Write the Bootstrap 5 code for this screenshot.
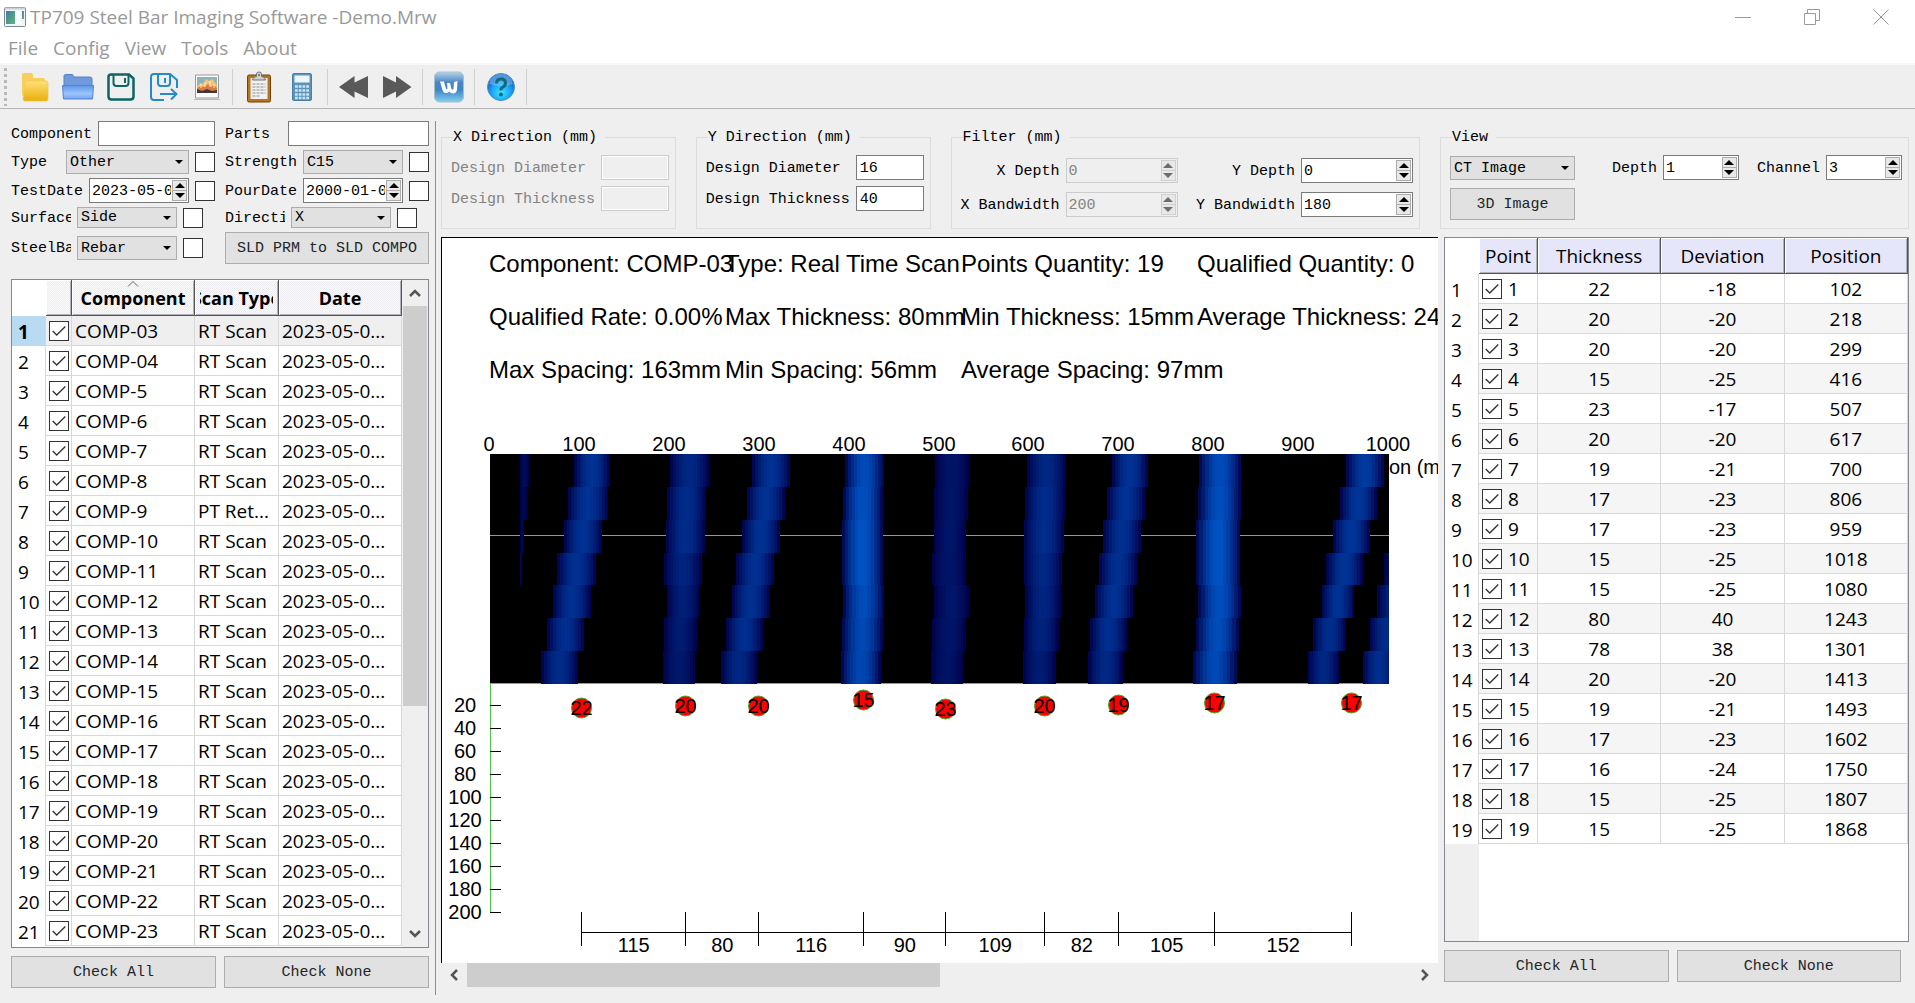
<!DOCTYPE html>
<html lang="en">
<head>
    <meta charset="UTF-8">
    <meta name="viewport" content="width=device-width, initial-scale=1.0">
    <title>TP709 Steel Bar Imaging Software</title>
    <link href="https://cdn.jsdelivr.net/npm/bootstrap@5.3.0/dist/css/bootstrap.min.css" rel="stylesheet">
    <style>
        body { background: #efefef; color: #000; font-family: "Liberation Mono", monospace; font-size: 15px; line-height: 18px; }
        .ui-font { font-family: "Open Sans", "Noto Sans", sans-serif; }

        .title-bar { height: 33px; font-size: 19px; color: #999; }
        .title-bar .window-btn { width: 69px; height: 33px; }
        .menu-bar { height: 30px; font-size: 19px; gap: 15px; padding-bottom: 1px; }
        .menu-bar a { color: #999; text-decoration: none; }
        .tool-bar { height: 46px; border-top: 2px solid #f7f7f7; border-bottom: 1px solid #b5b5b5; }
        .tool-bar button { width: 43px; height: 40px; }
        .tool-bar .tool-sep { width: 1px; height: 36px; margin: 0 4px; background: #cfcfcf; }
        .tool-grip { width: 3px; height: 38px; margin: 0 6px 0 4px; background: repeating-linear-gradient(#b8b8b8 0 3px, transparent 3px 6px); }
        .plain-btn { border: 0; padding: 0; background: none; display: flex; align-items: center; justify-content: center; }

        .workspace { display: grid; grid-template-columns: minmax(0, 436fr) minmax(0, 1002fr) minmax(0, 477fr); grid-template-rows: minmax(0, 1fr); padding: 12px 0 8px; min-height: 0; }
        .left-dock { padding: 0 6px 7px 11px; border-right: 1px solid #8c8c8c; }
        .center-dock { padding: 6px 0 8px 5px; }
        .right-dock { padding: 6px 6px 13px 2px; }
        .workspace label, .workspace legend { padding-top: 2px; }

        .form-grid { display: grid; grid-template-columns: minmax(0, 1fr) minmax(0, 1fr); gap: 4px 10px; margin-bottom: 15px; }
        .form-grid .line { display: flex; align-items: center; gap: 6px; min-width: 0; }
        .form-grid .line.short { padding-right: 12px; }
        .form-grid label { white-space: nowrap; overflow: hidden; flex: none; }
        .label-type { width: 49px; }
        .label-parts { width: 57px; }
        .label-cut { width: 60px; }

        .box-input, .box-spin { height: 25px; border: 1px solid #7a7a7a; background: #fff; border-radius: 0; padding: 2px 3px 0; min-width: 0; width: 100%; color: #000; }
        .box-input:disabled, .box-spin.off { background: #efefef; border-color: #ccc; color: #838383; }
        .box-input:disabled { box-shadow: inset 0 0 0 1px #fff; }
        .box-spin { display: flex; padding: 1px; }
        .box-spin input { border: 0; background: none; min-width: 0; width: 100%; padding: 2px 1px 0; color: inherit; outline: 0; }
        .spin-keys { width: 15px; flex: none; display: flex; flex-direction: column; border: 1px solid #adadad; }
        .spin-keys button { flex: 1; background: #e8e8e8; min-height: 0; }
        .spin-keys button + button { border-top: 1px solid #adadad; }
        .spin-keys button::after { content: ""; border: 5px solid transparent; border-top: 0; border-bottom: 5px solid #000; }
        .spin-keys button + button::after { border-bottom: 0; border-top: 5px solid #000; }
        .off .spin-keys { border-color: #d0d0d0; }
        .off .spin-keys button::after { border-bottom-color: #6d6d6d; }
        .off .spin-keys button + button { border-top-color: #d0d0d0; }
        .off .spin-keys button + button::after { border-top-color: #6d6d6d; }
        .box-select { appearance: none; height: 24px; border: 1px solid #adadad; border-radius: 0; padding: 2px 3px 0; min-width: 0; width: 100%; color: #000;
            background: #e1e1e1 url("data:image/svg+xml,%3Csvg xmlns='http://www.w3.org/2000/svg' width='8' height='4'%3E%3Cpath d='M0 0h8l-4 4z'/%3E%3C/svg%3E") no-repeat right 5px center; }
        .box-select.low { height: 21px; padding-top: 0; }
        .form-check-input.tick { width: 20px; height: 20px; margin: 0; flex: none; display: block; border: 1px solid #333; border-radius: 0; background-color: #fff; }
        .form-check-input.tick:checked { background-color: #fff; border-color: #333;
            background-image: url("data:image/svg+xml,%3Csvg xmlns='http://www.w3.org/2000/svg' viewBox='0 0 20 20'%3E%3Cpath d='M3 10l4.500 4.500L17 5' fill='none' stroke='%23333' stroke-width='1.500'/%3E%3C/svg%3E"); }
        .box-btn { --bs-btn-bg: #e1e1e1; --bs-btn-border-color: #adadad; --bs-btn-hover-bg: #e5f1fb; --bs-btn-border-radius: 0; --bs-btn-font-size: 15px; --bs-btn-line-height: 18px; --bs-btn-padding-x: 0; --bs-btn-padding-y: 7px; height: 32px; white-space: nowrap; }

        .group-row { display: grid; grid-template-columns: minmax(0, 1fr) minmax(0, 1fr) minmax(0, 2fr); gap: 20px; padding-right: 18px; margin-bottom: 8px; }
        fieldset.group { border: 1px solid #dcdcdc; height: 102px; padding: 8px 6px 0 9px; min-width: 0; }
        fieldset.group legend { float: none; width: auto; margin: 0 0 0 2px; padding-right: 8px; font-size: 15px; line-height: 18px; }
        .dir-grid { display: grid; grid-template-columns: auto minmax(0, 68px); gap: 6px; align-items: center; justify-content: space-between; white-space: nowrap; }
        .filter-grid { display: grid; grid-template-columns: auto minmax(0, 112px) 1fr minmax(0, 112px); gap: 9px 6px; align-items: center; text-align: right; white-space: nowrap; padding-top: 3px; }
        .muted-label { color: #838383; }
        .view-combo { width: 125px; }
        .view-spin { width: 76px; margin-left: 6px; }
        .view-gap { margin-left: 18px; }

        .frame { border: 1px solid #828790; background: #fff; min-height: 0; overflow: hidden; }
        .sheet { table-layout: fixed; width: 100%; border-collapse: separate; border-spacing: 0; font-size: 19px; line-height: 24px; }
        .sheet td, .sheet tbody th { height: 30px; padding: 0 3px; border-bottom: 1px solid #d8d8d8; border-right: 1px solid #d8d8d8; white-space: nowrap; overflow: hidden; }
        .sheet tbody th { border-bottom: 0; background: #fff; font-weight: 400; padding: 2px 0 0 6px; }
        .sheet thead th { height: 36px; padding: 0 5px; white-space: nowrap; border-right: 1px solid #555; border-bottom: 1px solid #555; box-shadow: inset 1px 1px #fff, inset -1px -1px #b0b0b8; position: relative; overflow: hidden; }
        .sheet thead td { height: 36px; border: 0; }
        .sheet .tick-label { gap: 6px; padding: 0; }
        .col-no { width: 34px; }
        .col-tick { width: 26px; }
        .col-scan { width: 84px; }
        .col-point { width: 59px; }
        .comp-sheet thead th { font-size: 18px; background: repeating-conic-gradient(#ececf0 0 25%, #fbfbfb 0 50%) 0 0 / 2px 2px; }
        .comp-sheet tbody tr:first-child td { background: #efefef; }
        .comp-sheet tbody tr:first-child th { background: #b9dbf2; font-weight: 700; }
        .sort-mark { position: absolute; top: 1px; left: 50%; margin-left: -6px; }
        .point-sheet thead th { background: #e6e6fa; font-weight: 400; text-align: center; }
        .point-sheet tbody tr:nth-child(even) td { background: #f5f5f5; }
        .point-frame { background: linear-gradient(to right, #efefef 34px, #fff 34px); }
        .point-sheet thead td { background: #fff; }

        .scroll-v { width: 26px; flex: none; background: #efefef; padding: 0 1px; display: flex; flex-direction: column; }
        .scroll-v .plain-btn { height: 26px; }
        .scroll-v .track, .scroll-h .track { flex: 1; }
        .scroll-v .thumb { height: 65%; background: #cdcdcd; }
        .scroll-h { height: 24px; display: flex; }
        .scroll-h .plain-btn { width: 26px; }
        .scroll-h .thumb { width: 50%; height: 24px; background: #cdcdcd; }

        .plot-view { border-top: 1px solid #000; border-left: 1px solid #000; background: #fff; overflow: hidden; min-height: 0; font-family: "Liberation Sans", Arial, sans-serif; }
        .stats { display: grid; grid-template-columns: repeat(4, 236px); grid-auto-rows: 53px; align-items: center; padding-left: 47px; font-size: 24px; line-height: 28px; white-space: nowrap; }
        .stats span { padding-bottom: 2px; }
        #plot { display: block; width: 100%; flex: 1; min-height: 0; font-size: 20px; }
    </style>
</head>
<body class="vh-100 d-flex flex-column overflow-hidden">
<header>
    <div class="title-bar bg-white ui-font d-flex align-items-center">
        <svg class="ms-1 me-1" width="22" height="20" viewBox="0 0 22 20">
            <defs><linearGradient id="appFill" x2="1" y2="1"><stop stop-color="#3f7fa0"/><stop offset="1" stop-color="#5fb47c"/></linearGradient></defs>
            <rect x=".5" y=".5" width="21" height="19" rx="1" fill="#f2f5f7" stroke="#7d8790"/>
            <path d="M1 1.500h20" stroke="#c9d1d8" stroke-width="2"/>
            <rect x="2" y="4" width="9" height="13" fill="url(#appFill)"/>
            <rect x="12.500" y="4" width="4" height="13" fill="#fff"/>
            <rect x="18" y="4" width="2" height="8" fill="url(#appFill)"/>
        </svg>
        <span class="me-auto">TP709 Steel Bar Imaging Software -Demo.Mrw</span>
        <button class="plain-btn window-btn" aria-label="Minimize"><svg width="16" height="16"><path d="M0 8.500h16" stroke="#999"/></svg></button>
        <button class="plain-btn window-btn" aria-label="Restore"><svg width="16" height="16" fill="none" stroke="#999"><path d="M.5 4.500h11v11H.5zM3.500 4V.5h12v11H12"/></svg></button>
        <button class="plain-btn window-btn" aria-label="Close"><svg width="16" height="16"><path d="M.5.5l15 15M15.500.5l-15 15" stroke="#999"/></svg></button>
    </div>
    <nav class="menu-bar bg-white ui-font d-flex align-items-center ps-2" aria-label="Menu">
        <a href="#file">File</a>
        <a href="#config">Config</a>
        <a href="#view">View</a>
        <a href="#tools">Tools</a>
        <a href="#about">About</a>
    </nav>
    <div class="tool-bar d-flex align-items-center" role="toolbar" aria-label="Toolbar">
        <span class="tool-grip"></span>
        <button class="plain-btn" aria-label="New">
            <svg width="28" height="30" viewBox="0 0 28 30">
                <defs><linearGradient id="gold" x2="0" y2="1"><stop stop-color="#ffe07a"/><stop offset="1" stop-color="#e9ae08"/></linearGradient></defs>
                <path d="M1 3q0-2 2-2h7q2 0 2 2v3h10q2 0 2 2v16H3q-2 0-2-2z" fill="#f7cf5c"/>
                <path d="M4 11q0-2 2-2h19q2 0 2 2v16q0 2-2 2H4q-2 0-2-2z" fill="url(#gold)" stroke="#f3c84a" stroke-width=".7"/>
            </svg>
        </button>
        <button class="plain-btn" aria-label="Open">
            <svg width="32" height="28" viewBox="0 0 32 28">
                <defs><linearGradient id="sky" x2="0" y2="1"><stop stop-color="#5e97ea"/><stop offset=".6" stop-color="#9cc4fb"/><stop offset="1" stop-color="#76a6ee"/></linearGradient></defs>
                <path d="M2 14V3q0-1.500 1.500-1.500h7L12 4h16q2 0 2 2v8z" fill="#6f9bdc" stroke="#5580c6"/>
                <path d="M.5 12.500h31L30.500 26h-29z" fill="url(#sky)" stroke="#4f83d6"/>
            </svg>
        </button>
        <button class="plain-btn" aria-label="Save">
            <svg width="28" height="28" viewBox="0 0 28 28" fill="none" stroke="#0c6464" stroke-width="2.500">
                <path d="M4 1.500h18l4.500 4v18q0 3-3 3h-19q-3 0-3-3V4q0-2.500 2.500-2.500z"/>
                <path d="M6.500 2v8q0 3 3 3h9q3 0 3-3V2" stroke-width="2"/><path d="M18 5v5" stroke-width="2"/>
            </svg>
        </button>
        <button class="plain-btn" aria-label="Save as">
            <svg width="28" height="28" viewBox="0 0 28 28" fill="none" stroke="#238cc8" stroke-width="2">
                <path d="M14 27H4q-3 0-3-3V4q0-3 3-3h16l7 6v8"/>
                <path d="M8 1v9q0 3 3 3h6q3 0 3-3V1M15 5v5M10 21h16M21 16l5.500 5-5.500 5.500"/>
            </svg>
        </button>
        <button class="plain-btn" aria-label="Picture">
            <svg width="28" height="28" viewBox="0 0 28 28">
                <path d="M2.500 2h23v23h-23z" fill="#fcfcfc" stroke="#999"/>
                <path d="M1 26.500h26" stroke="#bbb"/>
                <path d="M4 4h20v16H4z" fill="#8eb3b8"/>
                <path d="M4 14l3-4 3 1 3-5 3 2 3-2 5 6v5H4z" fill="#f3c57c"/>
                <path d="M4 15l4-2 3 1 4-3 3 3 3-2 3 3v5H4z" fill="#dd7a3d"/>
                <path d="M4 16l5 2 5-2 5 2 5-1v3H4z" fill="#413a3c"/>
                <path d="M8 11v4M12 9v5M17 8v6M21 11v4" stroke="#ffe6b0"/>
            </svg>
        </button>
        <span class="tool-sep"></span>
        <button class="plain-btn" aria-label="Report">
            <svg width="26" height="32" viewBox="0 0 26 32">
                <rect x="1.500" y="4" width="23" height="27" rx="1.500" fill="#b8731f" stroke="#72420e"/>
                <rect x="4.500" y="7" width="17" height="21" fill="#f1f1f1"/>
                <path d="M6.500 13h13M6.500 16h13M6.500 19h13M6.500 22h13M6.500 25h8" stroke="#8f8f8f" stroke-dasharray="3 1"/>
                <path d="M6.500 9q0-3 4-3.500V3q0-2 2.500-2t2.500 2v2.500q4 .5 4 3.500z" fill="#d0d0d0" stroke="#777"/><circle cx="13" cy="4" r="1" fill="#666"/>
            </svg>
        </button>
        <button class="plain-btn" aria-label="Calculator">
            <svg width="20" height="28" viewBox="0 0 20 28">
                <rect x=".5" y=".5" width="19" height="27" rx="1.500" fill="#5b94b8" stroke="#4681a8"/>
                <rect x="2.500" y="2.500" width="15" height="7" fill="#eef6fb"/>
                <path d="M3 13.500h14M3 17.500h14M3 21.500h14M3 25h14" stroke="#cfe4f1" stroke-width="2.500" stroke-dasharray="2.750 1"/>
            </svg>
        </button>
        <span class="tool-sep"></span>
        <button class="plain-btn" aria-label="Previous"><svg width="30" height="24" fill="#595959"><path d="M0 12L15.500 1v6.500L29 1v22l-13.500-6.500V23z"/></svg></button>
        <button class="plain-btn" aria-label="Next"><svg width="30" height="24" fill="#595959"><path d="M29.500 12L14 1v6.500L1 1v22l13-6.500V23z"/></svg></button>
        <span class="tool-sep"></span>
        <button class="plain-btn" aria-label="Word export">
            <svg width="30" height="32" viewBox="0 0 30 32">
                <defs><linearGradient id="word" x2="0" y2="1"><stop stop-color="#b5d3ea"/><stop offset=".35" stop-color="#4b86c4"/><stop offset=".6" stop-color="#3f86c6"/><stop offset="1" stop-color="#82d0ec"/></linearGradient></defs>
                <rect x=".5" y="1" width="29" height="30" rx="5" fill="url(#word)" stroke="#a9bfce"/>
                <path d="M6 10.500h4l2 7q.5 1.500 1.500 0l-.5-5.500h3l1.500 6q1 1.500 2 0l.5-7 3.500-1-.5 9q-1 3.500-4 3.500-2.500 0-3.500-2-2 2-4.500 1.500-2-.5-2.500-3z" fill="#fff"/>
            </svg>
        </button>
        <span class="tool-sep"></span>
        <button class="plain-btn" aria-label="Help">
            <svg width="30" height="30" viewBox="0 0 30 30">
                <defs><radialGradient id="orb" cy=".7"><stop stop-color="#3fe6ff"/><stop offset=".7" stop-color="#18a4f8"/><stop offset="1" stop-color="#1d74cf"/></radialGradient></defs>
                <circle cx="15" cy="15" r="13.500" fill="url(#orb)" stroke="#4b8fc9"/>
                <path d="M3.500 12a11.500 10 0 0 1 23 0q-11 4-23 0z" fill="#fff" opacity=".25"/>
                <path d="M10.500 11.500q0-4.500 4.500-4.500t4.500 4q0 2.500-2.500 4t-2 3.500" fill="none" stroke="#12687c" stroke-width="3"/><circle cx="15" cy="22.500" r="2" fill="#12687c"/>
            </svg>
        </button>
        <span class="tool-sep"></span>
    </div>
</header>

<main class="workspace flex-grow-1">
    <section class="left-dock d-flex flex-column">
        <div class="form-grid">
            <div class="line"><label for="component">Component</label><input class="box-input" id="component"></div>
            <div class="line"><label class="label-parts" for="parts">Parts</label><input class="box-input" id="parts"></div>

            <div class="line"><label class="label-type" for="type">Type</label><select class="box-select" id="type"><option>Other</option></select><input class="form-check-input tick" type="checkbox" aria-label="Apply type"></div>
            <div class="line"><label for="strength">Strength</label><select class="box-select" id="strength"><option>C15</option></select><input class="form-check-input tick" type="checkbox" aria-label="Apply strength"></div>

            <div class="line"><label for="testDate">TestDate</label><div class="box-spin" data-spin="testDate" data-value="2023-05-06"></div><input class="form-check-input tick" type="checkbox" aria-label="Apply test date"></div>
            <div class="line"><label for="pourDate">PourDate</label><div class="box-spin" data-spin="pourDate" data-value="2000-01-01"></div><input class="form-check-input tick" type="checkbox" aria-label="Apply pour date"></div>

            <div class="line short"><label class="label-cut" for="surface">Surface</label><select class="box-select low" id="surface"><option>Side</option></select><input class="form-check-input tick" type="checkbox" aria-label="Apply surface"></div>
            <div class="line short"><label class="label-cut" for="direction">Directi</label><select class="box-select low" id="direction"><option>X</option></select><input class="form-check-input tick" type="checkbox" aria-label="Apply direction"></div>

            <div class="line short"><label class="label-cut" for="steelBar">SteelBar</label><select class="box-select" id="steelBar"><option>Rebar</option></select><input class="form-check-input tick" type="checkbox" aria-label="Apply steel bar"></div>
            <button class="btn box-btn">SLD PRM to SLD COMPO</button>
        </div>
        <div class="frame d-flex flex-fill">
            <div class="flex-fill overflow-hidden">
                <table class="sheet comp-sheet ui-font">
                    <colgroup><col class="col-no"><col class="col-tick"><col><col class="col-scan"><col></colgroup>
                    <thead>
                    <tr>
                        <td></td>
                        <th></th>
                        <th><svg class="sort-mark" width="12" height="6" fill="none" stroke="#666"><path d="M1 5.500l5-5 5 5"/></svg><div class="d-flex justify-content-center overflow-hidden">Component</div></th>
                        <th><div class="d-flex justify-content-center overflow-hidden">Scan Type</div></th>
                        <th><div class="d-flex justify-content-center overflow-hidden">Date</div></th>
                    </tr>
                    </thead>
                    <tbody id="component-list"></tbody>
                </table>
            </div>
            <div class="scroll-v">
                <button class="plain-btn" aria-label="Scroll up"><svg width="12" height="10" fill="none" stroke="#555" stroke-width="2.500"><path d="M1 8l5-5 5 5"/></svg></button>
                <div class="track"><div class="thumb"></div></div>
                <button class="plain-btn" aria-label="Scroll down"><svg width="12" height="10" fill="none" stroke="#555" stroke-width="2.500"><path d="M1 2l5 5 5-5"/></svg></button>
            </div>
        </div>
        <div class="d-flex gap-2 mt-2">
            <button class="btn box-btn flex-fill w-50">Check All</button>
            <button class="btn box-btn flex-fill w-50">Check None</button>
        </div>
    </section>

    <section class="center-dock d-flex flex-column">
        <div class="group-row">
            <fieldset class="group">
                <legend>X Direction (mm)</legend>
                <div class="dir-grid muted-label">
                    <label for="xDiameter">Design Diameter</label><input class="box-input" id="xDiameter" disabled>
                    <label for="xThickness">Design Thickness</label><input class="box-input" id="xThickness" disabled>
                </div>
            </fieldset>
            <fieldset class="group">
                <legend>Y Direction (mm)</legend>
                <div class="dir-grid">
                    <label for="yDiameter">Design Diameter</label><input class="box-input" id="yDiameter" value="16">
                    <label for="yThickness">Design Thickness</label><input class="box-input" id="yThickness" value="40">
                </div>
            </fieldset>
            <fieldset class="group">
                <legend>Filter (mm)</legend>
                <div class="filter-grid">
                    <label for="xDepth">X Depth</label><div class="box-spin off" data-spin="xDepth" data-value="0"></div>
                    <label for="yDepth">Y Depth</label><div class="box-spin" data-spin="yDepth" data-value="0"></div>
                    <label for="xBand">X Bandwidth</label><div class="box-spin off" data-spin="xBand" data-value="200"></div>
                    <label for="yBand">Y Bandwidth</label><div class="box-spin" data-spin="yBand" data-value="180"></div>
                </div>
            </fieldset>
        </div>
        <div class="plot-view flex-fill d-flex flex-column">
            <div class="stats">
                <span>Component: COMP-03</span><span>Type: Real Time Scan</span><span>Points Quantity: 19</span><span>Qualified Quantity: 0</span>
                <span>Qualified Rate: 0.00%</span><span>Max Thickness: 80mm</span><span>Min Thickness: 15mm</span><span>Average Thickness: 24mm</span>
                <span>Max Spacing: 163mm</span><span>Min Spacing: 56mm</span><span>Average Spacing: 97mm</span>
            </div>
            <svg id="plot" role="img" aria-label="CT image"></svg>
        </div>
        <div class="scroll-h">
            <button class="plain-btn" aria-label="Scroll left"><svg width="10" height="12" fill="none" stroke="#555" stroke-width="2.500"><path d="M8 1L3 6l5 5"/></svg></button>
            <div class="track"><div class="thumb"></div></div>
            <button class="plain-btn" aria-label="Scroll right"><svg width="10" height="12" fill="none" stroke="#555" stroke-width="2.500"><path d="M2 1l5 5-5 5"/></svg></button>
        </div>
    </section>

    <section class="right-dock d-flex flex-column">
        <fieldset class="group mb-2">
            <legend>View</legend>
            <div class="d-flex align-items-center mb-2">
                <select class="box-select view-combo me-auto" aria-label="View mode"><option>CT Image</option></select>
                <label for="depth">Depth</label><div class="box-spin view-spin" data-spin="depth" data-value="1"></div>
                <label class="view-gap" for="channel">Channel</label><div class="box-spin view-spin" data-spin="channel" data-value="3"></div>
            </div>
            <button class="btn box-btn view-combo">3D Image</button>
        </fieldset>
        <div class="frame point-frame flex-fill ms-1">
            <table class="sheet point-sheet ui-font">
                <colgroup><col class="col-no"><col class="col-point"><col><col><col></colgroup>
                <thead>
                <tr>
                    <td></td>
                    <th>Point</th>
                    <th>Thickness</th>
                    <th>Deviation</th>
                    <th>Position</th>
                </tr>
                </thead>
                <tbody id="point-list"></tbody>
            </table>
        </div>
        <div class="d-flex gap-2 mt-2 ms-1 me-2">
            <button class="btn box-btn flex-fill w-50">Check All</button>
            <button class="btn box-btn flex-fill w-50">Check None</button>
        </div>
    </section>
</main>

<script src="https://cdn.jsdelivr.net/npm/bootstrap@5.3.0/dist/js/bootstrap.bundle.min.js"></script>
<script>
    const components = ["03", "04", 5, 6, 7, 8, 9, 10, 11, 12, 13, 14, 15, 16, 17, 18, 19, 20, 21, 22, 23];

    // thickness, deviation, position
    const points = [
        [22, -18, 102], [20, -20, 218], [20, -20, 299], [15, -25, 416], [23, -17, 507],
        [20, -20, 617], [19, -21, 700], [17, -23, 806], [17, -23, 959], [15, -25, 1018],
        [15, -25, 1080], [80, 40, 1243], [78, 38, 1301], [20, -20, 1413], [19, -21, 1493],
        [17, -23, 1602], [16, -24, 1750], [15, -25, 1807], [15, -25, 1868]
    ];
    const spacings = [115, 80, 116, 90, 109, 82, 105, 152];

    // one entry per bar: signal level per channel, then [left, right] per channel
    const bars = [
        { level: [.15, .1, .1, .1], spans: [[78, 87], [78, 85], [78, 82], [78, 80]] },
        { level: [.65, .65, .65, .62, .62, .6, .55], spans: [[132, 168], [126, 166], [122, 160], [115, 154], [111, 149], [105, 142], [99, 136]] },
        { level: [.5, .56, .56, .46, .4, .35, .3], spans: [[228, 267], [225, 264], [224, 263], [222, 260], [225, 257], [222, 255], [221, 253]] },
        { level: [.65, .65, .63, .62, .62, .6, .5], spans: [[310, 348], [305, 343], [300, 338], [294, 332], [290, 328], [284, 321], [279, 315]] },
        { level: [.95, 1, 1.05, 1.05, .97, .92, .9], spans: [[403, 442], [401, 441], [400, 441], [400, 441], [401, 442], [400, 441], [399, 439]] },
        { level: [.26, .26, .28, .26, .28, .26, .24], spans: [[493, 527], [492, 526], [492, 524], [490, 524], [492, 527], [490, 524], [489, 521]] },
        { level: [.5, .56, .56, .52, .48, .44, .36], spans: [[585, 624], [583, 623], [582, 622], [582, 620], [583, 619], [582, 617], [581, 614]] },
        { level: [.65, .65, .62, .62, .65, .6, .52], spans: [[670, 706], [665, 703], [661, 699], [657, 695], [653, 691], [648, 685], [646, 681]] },
        { level: [.95, 1, 1.05, 1.05, 1, .97, .92], spans: [[757, 799], [756, 799], [754, 798], [754, 798], [756, 799], [754, 797], [751, 795]] },
        { level: [.75, .68, .68, .66, .64, .58, .5], spans: [[904, 942], [898, 935], [891, 928], [884, 921], [880, 912], [871, 904], [866, 897]] },
        { level: [0, 0, 0, .3, .45, .55, .6], spans: [0, 0, 0, [942, 970], [935, 968], [928, 960], [921, 953]] }
    ];

    function fillComponents() {
        document.getElementById("component-list").innerHTML = components.map((name, i) => `
            <tr>
                <th>${i + 1}</th>
                <td><input class="form-check-input tick" type="checkbox" checked aria-label="COMP-${name}"></td>
                <td>COMP-${name}</td>
                <td>${name === 9 ? "PT Ret..." : "RT Scan"}</td>
                <td>2023-05-0...</td>
            </tr>`).join("");
    }

    function fillPoints() {
        document.getElementById("point-list").innerHTML = points.map((p, i) => `
            <tr>
                <th>${i + 1}</th>
                <td><label class="tick-label d-flex align-items-center"><input class="form-check-input tick" type="checkbox" checked><span>${i + 1}</span></label></td>
                ${p.map(v => `<td class="text-center">${v}</td>`).join("")}
            </tr>`).join("");
    }

    function fillSpins() {
        document.querySelectorAll("[data-spin]").forEach(box => {
            const off = box.classList.contains("off") ? "disabled" : "";
            box.innerHTML = `
                <input type="text" id="${box.dataset.spin}" value="${box.dataset.value}" ${off}>
                <span class="spin-keys">
                    <button class="plain-btn" aria-label="Increase" ${off}></button>
                    <button class="plain-btn" aria-label="Decrease" ${off}></button>
                </span>`;
        });
    }

    function drawPlot() {
        const left = 48, top = 57, width = 899, height = 230;
        const xOf = mm => Math.round(left + mm * width / 1000);
        const bandTop = i => top + Math.round(i * height / 7);
        let out = `<text x="898" y="77">Position (mm)</text>`;
        out += `<rect x="${left}" y="${top}" width="${width}" height="${height}"/>`;
        out += `<path d="M${left} 138.500h${width}M${left} 286.500h${width}M48.500 287v228" stroke="#50c850"/>`;

        const slices = 13;
        let image = "";
        bars.forEach(bar => bar.spans.forEach((span, row) => {
            if (!span) return;
            const [x0, x1] = span;
            for (let k = 0; k < slices; k++) {
                const v = bar.level[row] * Math.sin(Math.PI * (k + .5) / slices);
                const a = x0 + Math.round(k * (x1 - x0) / slices);
                const b = x0 + Math.round((k + 1) * (x1 - x0) / slices);
                image += `<rect x="${a}" y="${bandTop(row)}" width="${b - a}" height="${bandTop(row + 1) - bandTop(row)}" fill="rgb(0,${Math.round(78 * v)},${Math.round(72 + 118 * v)})"/>`;
            }
        }));
        out += `<svg width="${left + width}" height="${top + height}" shape-rendering="crispEdges">${image}</svg>`;

        for (let mm = 0; mm <= 1000; mm += 100) {
            out += `<text x="${xOf(mm) - 1}" y="54" text-anchor="middle">${mm}</text>`;
        }
        for (let i = 1; i <= 10; i++) {
            const y = 285 + i * 23;
            out += `<path d="M48 ${y + .5}h11" stroke="#000"/><text x="23" y="${y + 7}" text-anchor="middle">${i * 20}</text>`;
        }

        const shown = points.slice(0, 9);
        shown.forEach(([thick, , pos], i) => {
            const x = xOf(pos) - .5, y = Math.round(286 + thick * 1.15);
            out += `<circle cx="${x}" cy="${y}" r="10" fill="#f00" stroke="#3fae2a"/><text x="${x}" y="${y + 7}" text-anchor="middle">${thick}</text>`;
            out += `<path d="M${x} 515v34" stroke="#000"/>`;
            if (i < spacings.length) {
                out += `<text x="${(x + xOf(shown[i + 1][2])) / 2}" y="555" text-anchor="middle">${spacings[i]}</text>`;
            }
        });
        out += `<path d="M${xOf(102)} 535.500H${xOf(959)}" stroke="#000"/>`;
        document.getElementById("plot").innerHTML = out;
    }

    fillComponents();
    fillPoints();
    fillSpins();
    drawPlot();
</script>
</body>
</html>
